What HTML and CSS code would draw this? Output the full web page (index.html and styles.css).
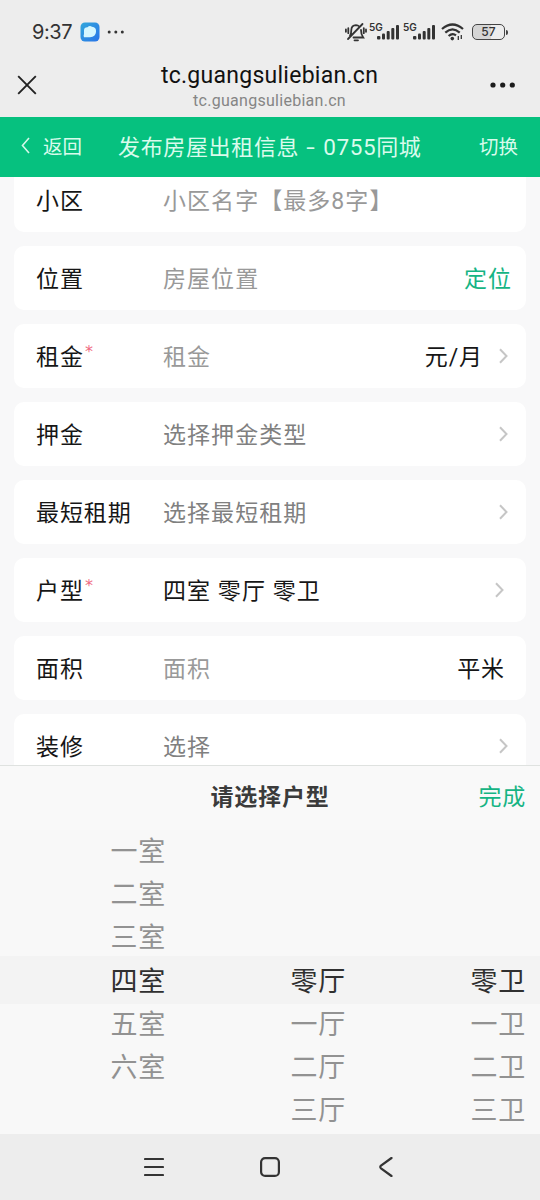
FILE: index.html
```html
<!DOCTYPE html>
<html lang="zh-CN">
<head>
<meta charset="utf-8">
<title>发布房屋出租信息 - 0755同城</title>
<link rel="stylesheet" href="styles.css">
</head>
<body>
<div class="screen">
  <div class="status">
    <span class="time">9:37</span>
    <svg class="app" width="20" height="20" viewBox="0 0 20 20"><defs><linearGradient id="appFill" x1="0" y1="0" x2="1" y2="1"><stop offset="0" stop-color="#32a8dc"/><stop offset="1" stop-color="#2874e8"/></linearGradient></defs><rect x=".5" y=".5" width="19" height="19" rx="4.5" fill="url(#appFill)"/><path d="M4 8.5Q4 5.2 7.5 5.2Q9.5 3.2 12 4.7Q16.5 5 16 10Q15.6 14.8 10 15.2H4Q3.2 14 4 12Z" fill="#d5f7ff"/></svg>
    <svg class="dots" width="18" height="6" viewBox="0 0 18 6"><g fill="#333"><circle cx="2.2" cy="3" r="1.5"/><circle cx="8.8" cy="3" r="1.5"/><circle cx="15.3" cy="3" r="1.5"/></g></svg>
    <div class="indicators">
      <svg width="22" height="20" viewBox="0 0 22 20" fill="none" stroke="#333" stroke-width="1.8" stroke-linecap="round"><path d="M3 17L17.5 2M5 13.5Q6.3 12 6.3 8Q6.5 3.5 11 3.2Q13 3.2 14.2 4.5M16 8Q16 12.5 18.2 15.5H8.5M9.5 18.3H13M3.3 6.2V11.2M.9 7.5V9.8M18.8 6.2V11.2M21 7.5V9.8"/></svg>
      <span class="net">5G</span>
      <svg class="bars" width="23" height="16" viewBox="0 0 23 16" fill="#333"><rect x="0" y="12" width="3.4" height="3.4" rx="1"/><rect x="5" y="9.5" width="3" height="6" rx="1"/><rect x="9.7" y="7" width="3" height="8.5" rx="1"/><rect x="14.3" y="4" width="3" height="11.5" rx="1"/><rect x="19" y="1" width="3" height="14.5" rx="1"/></svg>
      <span class="net">5G</span>
      <svg class="bars" width="23" height="16" viewBox="0 0 23 16" fill="#333"><rect x="0" y="12" width="3.4" height="3.4" rx="1"/><rect x="5" y="9.5" width="3" height="6" rx="1"/><rect x="9.7" y="7" width="3" height="8.5" rx="1"/><rect x="14.3" y="4" width="3" height="11.5" rx="1"/><rect x="19" y="1" width="3" height="14.5" rx="1"/></svg>
      <svg class="wifi" width="23" height="18" viewBox="0 0 23 18" fill="none" stroke="#333" stroke-width="2.2"><path d="M1 6Q11.5-3 22 6M4.3 9.6Q11.5 3.2 18.7 9.6M7.6 13Q11.5 9.5 15 12.3"/><circle cx="11.3" cy="15.6" r="1.8" fill="#333" stroke="none"/><path d="M17.3 13V17M20.3 12V16" stroke-width="1.3"/></svg>
      <span class="battery">57</span><i class="cap"></i>
    </div>
  </div>
  <div class="titlebar">
    <svg class="close" width="20" height="20" viewBox="0 0 20 20" stroke="#222" stroke-width="1.9"><path d="M1.2 1.2L18.8 18.8M18.8 1.2L1.2 18.8"/></svg>
    <div class="titles"><div class="site">tc.guangsuliebian.cn</div><div class="host">tc.guangsuliebian.cn</div></div>
    <svg class="more" width="26" height="6" viewBox="0 0 26 6" fill="#1c1c1c"><circle cx="3" cy="3" r="2.6"/><circle cx="12.7" cy="3" r="2.6"/><circle cx="22.3" cy="3" r="2.6"/></svg>
  </div>
  <div class="nav">
    <div class="back"><svg width="9" height="17" viewBox="0 0 9 17" fill="none" stroke="#d5f8e9" stroke-width="1.6"><path d="M8 1L1.5 8.5L8 16"/></svg><span>返回</span></div>
    <div class="navtitle">发布房屋出租信息<span class="dash">-</span><span class="digits">0755</span>同城</div>
    <div class="switch">切换</div>
  </div>
  <div class="form">
    <div class="row"><div class="label">小区</div><div class="value hint">小区名字【最多8字】</div></div>
    <div class="row"><div class="label">位置</div><div class="value hint">房屋位置</div><div class="locate">定位</div></div>
    <div class="row"><div class="label">租金<sup>*</sup></div><div class="value hint">租金</div><div class="unit">元<span class="slash">/</span>月</div><svg class="arrow" viewBox="0 0 9 16"><path d="M1 1.2L7.5 8L1 14.8"/></svg></div>
    <div class="row"><div class="label">押金</div><div class="value pick">选择押金类型</div><svg class="arrow" viewBox="0 0 9 16"><path d="M1 1.2L7.5 8L1 14.8"/></svg></div>
    <div class="row"><div class="label">最短租期</div><div class="value pick">选择最短租期</div><svg class="arrow" viewBox="0 0 9 16"><path d="M1 1.2L7.5 8L1 14.8"/></svg></div>
    <div class="row"><div class="label">户型<sup>*</sup></div><div class="value">四室 零厅 零卫</div><svg class="arrow inset" viewBox="0 0 9 16"><path d="M1 1.2L7.5 8L1 14.8"/></svg></div>
    <div class="row"><div class="label">面积</div><div class="value hint">面积</div><div class="area">平米</div></div>
    <div class="row"><div class="label">装修</div><div class="value pick">选择</div><svg class="arrow" viewBox="0 0 9 16"><path d="M1 1.2L7.5 8L1 14.8"/></svg></div>
  </div>
  <div class="sheet">
    <div class="sheethead"><span></span><b>请选择户型</b><span class="done">完成</span></div>
    <div class="picker">
      <div class="col"><span>一室</span><span>二室</span><span>三室</span><span class="on">四室</span><span>五室</span><span>六室</span></div>
      <div class="col"><span></span><span></span><span></span><span class="on">零厅</span><span>一厅</span><span>二厅</span><span>三厅</span></div>
      <div class="col"><span></span><span></span><span></span><span class="on">零卫</span><span>一卫</span><span>二卫</span><span>三卫</span></div>
    </div>
  </div>
  <div class="keys">
    <svg width="20" height="20" viewBox="0 0 20 20"><path d="M1 2H19M1 10H19M1 18H19"/></svg>
    <svg width="20" height="20" viewBox="0 0 20 20"><rect x="1.1" y="1.1" width="17.8" height="17.8" rx="4"/></svg>
    <svg width="20" height="20" viewBox="0 0 20 20"><path d="M15.5 1L5 8.7Q3.5 10 5 11.3L15.5 19"/></svg>
  </div>
</div>
</body>
</html>
```
FILE: styles.css
```css
* { box-sizing: border-box; }
body { margin: 0; background: #ededed; font-family: Roboto, "Noto Sans CJK SC", sans-serif; }
svg { display: block; flex: none; }
.screen { width: 540px; height: 1200px; display: flex; flex-direction: column; overflow: hidden; }
.status { height: 60px; flex: none; padding: 4px 32px 0 32px; display: flex; align-items: center; color: #333; }
.time { font: 20px/24px Inter, sans-serif; width: 48px; letter-spacing: -.4px; white-space: nowrap; }
.dots { margin-left: 7px; }
.indicators { margin-left: auto; display: flex; align-items: center; }
.net { font: 600 10px/12px Inter, sans-serif; width: 14px; margin: -10px -6px 0 4px; white-space: nowrap; }
.indicators > svg:first-child { margin-right: -2px; }
.net + .bars + .net { margin-left: 3px; margin-right: -4px; }
.wifi { margin-left: 5px; }
.battery { margin-left: 8px; width: 33px; height: 16px; border: 1.5px solid #444; border-radius: 5px; background: linear-gradient(90deg, #d5d5d5 57%, #ededed 57%); font: 500 12px/13px Inter, sans-serif; text-align: center; }
.cap { width: 2px; height: 5px; margin-left: 1px; background: #444; border-radius: 0 2px 2px 0; }
.titlebar { height: 57px; flex: none; padding: 0 24px 0 17px; display: grid; grid-template-columns: 26px 1fr 26px; }
.close { margin-top: 15px; }
.more { margin-top: 22px; }
.titles { padding-left: 6px; text-align: center; white-space: nowrap; }
.site { font-size: 23px; line-height: 31px; color: #111; letter-spacing: .27px; }
.host { font-size: 16px; line-height: 20px; color: #858585; letter-spacing: .28px; }
.nav { height: 60px; flex: none; background: #06c17f; color: #d9fbec; display: flex; align-items: center; padding: 0 21px 3px; white-space: nowrap; }
.back { display: flex; align-items: center; gap: 13px; width: 97px; font-size: 19.5px; }
.navtitle { font-size: 22px; letter-spacing: .65px; width: 306px; margin-top: -2px; }
.dash { display: inline-block; width: 24px; text-align: center; transform: scaleX(1.4); }
.digits { letter-spacing: .6px; font-size: 22.5px; }
.switch { margin-left: auto; margin-right: 1px; font-size: 19.5px; }
.form { height: 588px; flex: none; overflow: hidden; background: #f8f8f9; padding: 0 14px; }
.row { height: 64px; margin-bottom: 14px; padding: 0 14px 3px 22px; background: #fff; border-radius: 10px; display: flex; align-items: center; font-size: 23px; letter-spacing: .9px; color: #161616; white-space: nowrap; }
.row:first-child { margin-top: -9px; }
.label { width: 127px; position: relative; }
.label sup { position: absolute; top: 4px; left: 49px; font: 16px/20px "DejaVu Sans", sans-serif; color: #f06a82; }
.value { flex: 1; letter-spacing: 1.05px; }
.hint { color: #999; }
.pick { color: #808080; }
.locate { color: #16b484; letter-spacing: 1px; }
.unit { margin-right: 16px; }
.arrow { width: 9px; height: 16px; margin-top: 3px; margin-right: 4px; fill: none; stroke: #c6c6c6; stroke-width: 2; }
.arrow.inset { margin-right: 8px; }
.area { margin-right: 7px; }
.sheet { height: 369px; flex: none; background: #f9f9f9; border-top: 1px solid #dfe2e0; }
.sheethead { height: 64px; padding: 0 14px 6px; display: grid; grid-template-columns: 1fr auto 1fr; align-items: center; font-size: 23px; letter-spacing: .8px; color: #3b3b3b; }
.sheethead b { font-weight: 700; }
.sheethead .done { color: #16b484; text-align: right; }
.picker { height: 304px; display: grid; grid-template-columns: repeat(3, 180px); background: linear-gradient(#f8f8f8 126px, #f3f3f3 126px, #f3f3f3 174px, #f8f8f8 174px); }
.col { display: flex; flex-direction: column; padding: 1px 14px 0 0; text-align: right; }
.col span { flex: none; height: 43.2px; line-height: 43px; font-size: 27px; letter-spacing: .8px; color: #929292; }
.col .on { color: #303030; }
.keys { height: 66px; flex: none; background: #ededed; display: flex; justify-content: center; gap: 96px; padding-top: 23px; }
.keys svg { fill: none; stroke: #343434; stroke-width: 2.2; stroke-linecap: round; }
```
